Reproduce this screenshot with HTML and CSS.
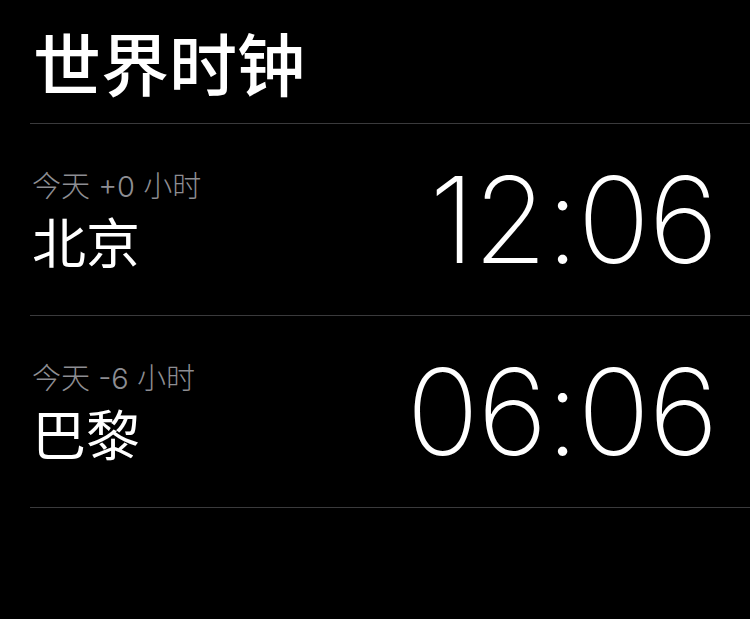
FILE: index.html
```html
<!DOCTYPE html>
<html lang="zh-CN">
<head>
<meta charset="utf-8">
<link rel="stylesheet" href="styles.css">
</head>
<body>
<div class="screen">
  <header class="header">
    <h1 class="title">世界时钟</h1>
  </header>
  <ul class="list">
    <li class="row">
      <div class="info">
        <div class="offset">今天 +0 小时</div>
        <div class="city">北京</div>
      </div>
      <div class="time">12:06</div>
    </li>
    <li class="row">
      <div class="info">
        <div class="offset">今天 -6 小时</div>
        <div class="city">巴黎</div>
      </div>
      <div class="time">06:06</div>
    </li>
  </ul>
</div>
</body>
</html>
```
FILE: styles.css
```css
html, body {
  margin: 0;
  padding: 0;
  background: #000;
}
.screen {
  width: 750px;
  height: 619px;
  background: #000;
  color: #fff;
  font-family: "Noto Sans CJK SC", "Noto Sans", sans-serif;
  overflow: hidden;
}
.header {
  margin-left: 30px;
  height: 124px;
  border-bottom: 1px solid #3a3a3c;
  box-sizing: border-box;
  display: flex;
  align-items: center;
}
.title {
  margin: 0;
  padding-left: 3px;
  font-size: 68px;
  font-weight: 500;
  line-height: 1;
  letter-spacing: 0;
}
.list {
  list-style: none;
  margin: 0 0 0 30px;
  padding: 0;
}
.row {
  height: 192px;
  box-sizing: border-box;
  border-bottom: 1px solid #3a3a3c;
  display: flex;
  align-items: center;
  justify-content: space-between;
  padding-right: 33px;
}
.info {
  display: flex;
  flex-direction: column;
  padding-left: 2px;
}
.offset {
  font-family: "Inter", "Noto Sans CJK SC", sans-serif;
  font-size: 29px;
  font-weight: 300;
  line-height: 32px;
  color: #8e8e93;
}
.city {
  font-size: 54px;
  line-height: 56px;
  margin-top: 10px;
}
.time {
  font-family: "Inter", "Roboto", sans-serif;
  font-weight: 200;
  font-size: 120px;
  line-height: 1;
  letter-spacing: -1.5px;
}
```
